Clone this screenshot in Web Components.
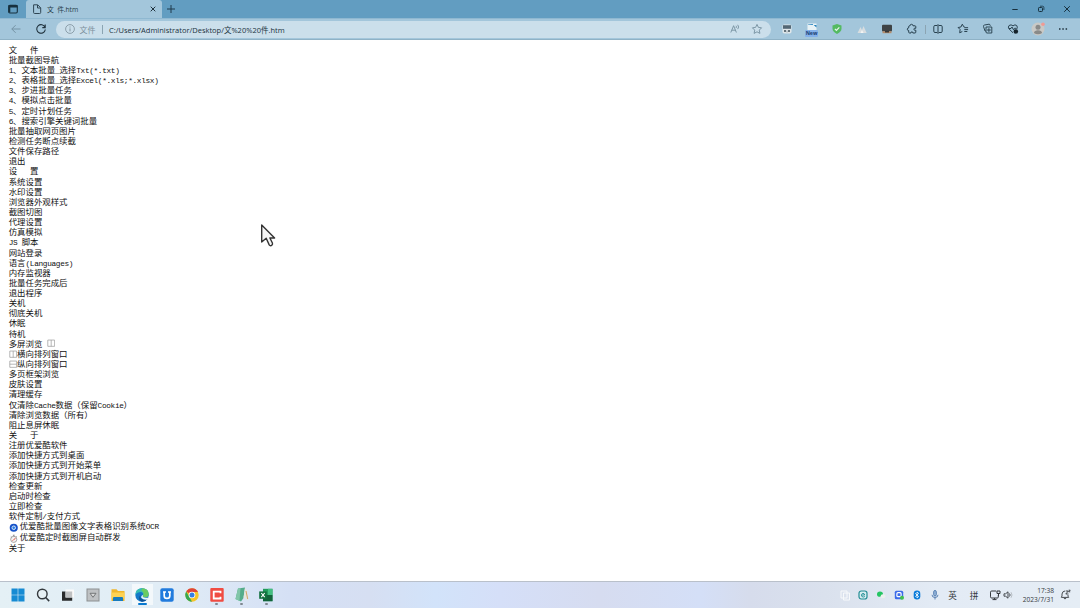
<!DOCTYPE html>
<html>
<head>
<meta charset="utf-8">
<title>文 件.htm</title>
<style>
    body {
        margin: 0;
        width: 1080px;
        height: 608px;
        overflow: hidden;
        font-family: "Open Sans", "Noto Sans CJK SC", sans-serif;
    }
</style>
</head>
<body>
<browser-window></browser-window>

<script>
const ICONS = {
    tabs: `<rect x="3.7" y="4.2" width="8.6" height="7.8" rx="1.2" fill="none" stroke="#17303e" stroke-width="1.1"/><path d="M3.5 4h9v2.6h-9zM3.5 6h1.8v5.5H3.5z" fill="#17303e"/>`,
    page: `<path d="M4.6 3.8h4.1l3 3v4.7q0 1-1 1H5.600q-1 0-1-1zM8.500 4v3h3" fill="none" stroke="#2f4654" stroke-width="1"/>`,
    close: `<path d="M5.700 5.700l4.600 4.600M10.300 5.700l-4.600 4.600" stroke="#20323d" stroke-width="1"/>`,
    plus: `<path d="M8 4v8M4 8h8" stroke="#1f3b4c" stroke-width="1"/>`,
    min: `<path d="M5.300 8.500h5.400" stroke="#17303e" stroke-width="1"/>`,
    restore: `<rect x="5.500" y="6.500" width="4" height="4" rx=".8" fill="none" stroke="#17303e" stroke-width="1"/><path d="M7 5.200h2.500q1.400 0 1.400 1.400V9" fill="none" stroke="#17303e" stroke-width=".8"/>`,
    exit: `<path d="M5.200 5.200l5.600 5.600M10.800 5.200l-5.600 5.600" stroke="#17303e" stroke-width="1"/>`,
    back: `<path d="M12.500 8H3.800M7.600 4.200L3.800 8l3.800 3.800" fill="none" stroke="#7593a5" stroke-width="1"/>`,
    reload: `<path d="M12 6.300A4.300 4.300 0 1 0 12.300 8.500M12.200 3.600v3H9.300" fill="none" stroke="#20323d" stroke-width="1.100"/>`,
    info: `<circle cx="8" cy="8" r="4.400" fill="none" stroke="#7c8f9b" stroke-width=".8"/><path d="M8 7.400v3M8 5.500v1" stroke="#7c8f9b" stroke-width=".9"/>`,
    read: `<path d="M3.800 11.500L6.600 4.700l2.800 6.800M4.800 9.200h3.700M9 4.800q1 1 0 2.200M10.700 3.800q1.900 2.200 0 4.300" fill="none" stroke="#75909f" stroke-width=".9"/>`,
    star: `<path d="M8 3.400l1.400 3 3.200.4-2.300 2.300.6 3.300L8 10.800l-2.900 1.600.6-3.300-2.300-2.300 3.200-.4z" fill="none" stroke="#75909f" stroke-width=".9"/>`,
    robot: `<rect x="3.500" y="3.500" width="9" height="9" rx="1.800" fill="#dfe6e9"/><path d="M4 4.200h8v3.600H4z" fill="#536875"/><path d="M5 9h2v2H5zM9 9h2v2H9z" fill="#65747c"/><path d="M7.500 9.500h1v2h-1z" fill="#9aa8af"/>`,
    shield: `<path d="M8 3l4.500 1.400v3.400q0 3-4.500 5.200-4.500-2.200-4.500-5.200V4.400z" fill="#54ba62"/><path d="M5.900 7.800l1.500 1.500 2.900-3" fill="none" stroke="#e9f8eb" stroke-width="1.200"/>`,
    hills: `<path d="M3.500 12l3-6 1.500 3 1.500-4 3.200 7z" fill="#d7dde0"/><path d="M6.500 12l1.500-3 1.600 3z" fill="#f4f5f4"/>`,
    screen: `<rect x="3" y="3.800" width="10" height="6.800" rx="1" fill="#3f4345"/><path d="M3.500 10.200h9v2h-9z" fill="#b48c6b"/><path d="M6 9.700h4v1.800H6z" fill="#373839"/>`,
    puzzle: `<path d="M6 4.800q0-1.500 1.500-1.500T9 4.800h2q.8 0 .8.900v1.600q-1.900-.6-1.900.9t1.900 1v1.900q0 .900-.8.900H8.800q.2-1.200-.9-1.200t-.9 1.200H5.500q-.8 0-.8-.9V9.500q-1.400 0-1.400-1.300t1.400-1.300V5.700q0-.9.8-.9z" fill="none" stroke="#28414f" stroke-width="1"/>`,
    split: `<path d="M7.300 4.500H5q-1.200 0-1.200 1.200v4.600q0 1.200 1.200 1.200h2.300M8.700 4.500H11q1.200 0 1.200 1.200v4.600q0 1.200-1.200 1.200H8.700M8 3.200v9.600" fill="none" stroke="#28414f" stroke-width="1"/>`,
    favorites: `<path d="M9.600 5.900L8.800 5.800 7.300 3.200 5.900 6l-2.800.5 2 2-.4 3.300L7.300 10.500M9.300 6.700h3.800M9.300 8.600h3.800M9.300 10.500h3" fill="none" stroke="#28414f" stroke-width="1"/>`,
    collections: `<path d="M5.800 10H5L3.500 5.500q-.3-1.200 1-1.500l4.600-.8q1 0 1.200 1.600M6 6h5.800v6H7q-1 0-1-1zM8.900 7.200v3.700M7 9h3.800" fill="none" stroke="#28414f" stroke-width=".95"/>`,
    health: `<path d="M8 11.800L4.100 8q-1.500-2 0-3.500 2-1.500 3.900.4 2-1.900 3.700-.4Q13 6.300 11.700 8M4 7.500h2l1-1.500 1.500 2.800 1-1.500h1.700" fill="none" stroke="#28414f" stroke-width="1"/><circle cx="10.800" cy="10.500" r="2.300" fill="#15232b"/>`,
    avatar: `<circle cx="8" cy="8" r="6.500" fill="#c9c9c6"/><circle cx="8" cy="6.300" r="2.500" fill="#898a89"/><path d="M3.900 12q.5-2.700 4.100-2.700T12.100 12Q8 14.700 3.900 12" fill="#898a89"/><circle cx="13" cy="3.300" r="1.800" fill="#f19a94"/>`,
    more: `<path d="M4 7.300h1.500v1.400H4zM7.300 7.300h1.500v1.400H7.300zM10.600 7.300h1.500v1.400h-1.500z" fill="#20323d"/>`,
    windows: `<path d="M1.500 1.500h6.200v6.200H1.500zM8.300 1.500h6.200v6.200H8.300zM1.500 8.300h6.200v6.200H1.500zM8.300 8.300h6.200v6.200H8.300z" fill="#168bd3"/>`,
    search: `<circle cx="7.300" cy="7" r="4.800" fill="#e6f0f4" stroke="#343a3e" stroke-width="1.400"/><path d="M10.700 10.500l3.500 3.600" stroke="#343a3e" stroke-width="1.600"/>`,
    task: `<path d="M5.500 2.500h8.500v8H5.500z" fill="#fafafa"/><path d="M2 4.500h3.500v6h6.700v3.300H2z" fill="#292a2b"/><path d="M5.500 4.500h6.700v6H5.500z" fill="#bfc1c2"/>`,
    down: `<rect x="2" y="2" width="12" height="12" fill="#bec1c3" stroke="#8c8f91" stroke-width="1"/><path d="M5 6.300h6l-3 4z" fill="#d8d9d9" stroke="#6b6d6e" stroke-width=".9"/>`,
    folder: `<path d="M1.500 2.300h5l1.500 1.700h6.500v10H1.500z" fill="#efb62c"/><path d="M1.500 5.500h13v6h-13z" fill="#fdd253"/><path d="M4 10h8q1 0 1 1v3H3v-3q0-1 1-1" fill="#177bbd"/>`,
    edge: `<circle cx="8" cy="8" r="6.700" fill="#1479c9"/><path d="M1.300 7.500Q2 1.300 8 1.300q6.500.2 6.700 5.900 0 3-3.500 3.100-2.800 0-2-1.800.8-2.800-2.200-3.500-3.300-.4-5.700 2.500" fill="#36bdb3"/><path d="M8 1.300q6.500.2 6.700 5.900 0 3-3.500 3.100-2.800 0-2-1.800 1.200-3-1.700-5" fill="#6acb62"/><path d="M6.800 7q-1.800 4.500 2.500 5.500 2.200.5 4.300-.7Q11.500 15 7.700 14.700 3 13 6.800 7" fill="#105397"/><path d="M9.100 7.800q-1.500 2.800 2.600 3h2.800l-1 1.800q-4.200.5-6.300-1.800-.5-2.200 1.900-3" fill="#ecf7f8"/>`,
    ublue: `<rect x="1.300" y="1.300" width="13.400" height="13.400" rx="2" fill="#217bdd"/><path d="M5.200 5v3.700q0 2.700 2.800 2.700t2.800-2.700V5M4 5h3M9 5h3" fill="none" stroke="#fff" stroke-width="1.700"/>`,
    chrome: `<circle cx="8" cy="8" r="6.700" fill="#f5c52a"/><path d="M8 8L2.200 4.600A6.700 6.700 0 0 1 14 5H8z" fill="#de4439"/><path d="M2.200 4.600L5.400 10 8 14.700A6.700 6.700 0 0 1 2.200 4.600" fill="#36a853"/><circle cx="8" cy="8" r="3.300" fill="#fff"/><circle cx="8" cy="8" r="2.500" fill="#347fe3"/>`,
    camtasia: `<rect x="1.300" y="1" width="13.400" height="13.700" rx="1" fill="#f04c43"/><path d="M11.500 6.200V4.700H4.700v6.800h6.800v-1.700" fill="none" stroke="#fff" stroke-width="1.800"/>`,
    note: `<path d="M4 1.500l7-1-1.500 10.500L7 14.500 1.500 12z" fill="#55ac8b"/><path d="M4 1.500l2.500-.4L5.500 14 1.500 12z" fill="#82c6a9"/><path d="M11 1l1.600 2 1.600 10.500-4.700-3z" fill="#e6e6dd"/><path d="M12 4l1.700 8" stroke="#d3a666"/>`,
    excel: `<path d="M5 1.800h9.500v12.400H5z" fill="#219b5b"/><path d="M10 1.800h4.500V8H10z" fill="#43bd80"/><path d="M5 8h9.500v6.200H5z" fill="#12633a"/><rect x="1.200" y="4.400" width="7.600" height="7.400" fill="#13713f"/><path d="M3.300 6l3.400 4.200M6.700 6l-3.400 4.200" stroke="#fff" stroke-width="1.100"/>`,
    copy: `<path d="M4 4h6v7H4zM6.500 6h6v7h-6z" fill="none" stroke="#f7f9fb" stroke-width="1"/>`,
    teal: `<rect x="4" y="4" width="8" height="8" rx="2.200" fill="#d7edf0" stroke="#238d94" stroke-width="1.200"/><path d="M9.900 9.500q-1.700 1.100-3 0-1.300-1.800.4-3 2.200-.6 2.400 1.500H7" fill="none" stroke="#238d94" stroke-width=".9"/>`,
    wechat: `<ellipse cx="7" cy="7.200" rx="3" ry="2.600" fill="#24c562"/><ellipse cx="10" cy="9.300" rx="2.400" ry="2" fill="#edf0ee"/>`,
    guard: `<rect x="3.800" y="3.800" width="8.400" height="8.400" rx="1.500" fill="#3b6be9"/><rect x="5.900" y="5.700" width="4.200" height="4" rx="1" fill="none" stroke="#fff" stroke-width="1.200"/><circle cx="11" cy="10.800" r="2" fill="#40bf50"/>`,
    bluetooth: `<rect x="4.700" y="3.500" width="6.600" height="9" rx="3.200" fill="#087bda"/><path d="M6.200 6.300l3.500 3.300L8 11V5l1.700 1.400-3.500 3.300" fill="none" stroke="#fff" stroke-width=".8"/>`,
    mic: `<rect x="6.700" y="3.500" width="2.600" height="5.500" rx="1.300" fill="#95b5da" stroke="#4c77ad" stroke-width=".9"/><path d="M5 7.800q0 2.700 3 2.700t3-2.700M8 10.500v2" fill="none" stroke="#4c77ad" stroke-width=".9"/>`,
    network: `<path d="M9.300 4H4.700q-1.200 0-1.200 1.200v4.600q0 1.200 1.200 1.200h5.600q1 0 1-1V8M5.500 12.600h4M7.500 11v1.500" fill="none" stroke="#34393d" stroke-width="1"/><path d="M10 4h3v2.500h-3zM11.500 6.500V9" fill="none" stroke="#34393d" stroke-width="1"/>`,
    sound: `<path d="M4 6.800h1.600L8 4.800v6.400L5.600 9.200H4zM9.500 6.500q1.200 1.500 0 3" fill="none" stroke="#34393d" stroke-width=".9"/><path d="M11 5.200q2 2.800 0 5.600" fill="none" stroke="#acb3b9" stroke-width=".8"/>`,
    bell: `<path d="M4.300 10.300L5 9V7q.3-2.800 3-3M11 8v1.200l.7 1.200H4.300M6.800 11.200q1.200 1.400 2.400 0M8.700 4h2.600L8.800 7h2.700M11.700 3.200h1.500l-1.500 1.600h1.500" fill="none" stroke="#34393d" stroke-width=".9"/>`,
    ocr: `<circle cx="8" cy="8" r="6.800" fill="#1752c8"/><circle cx="8" cy="8" r="3" fill="#2f82df" stroke="#dcebfc" stroke-width="1.600"/>`,
    timer: `<circle cx="8" cy="9" r="5.200" fill="#f6f3f2" stroke="#8a8685" stroke-width="1.200"/><path d="M6.500 2h3M8 2v2M3 4l1.300 1M13 4l-1.300 1" stroke="#777" stroke-width="1.200"/><path d="M8 9.300l3-2M8 9.300l-2 2" stroke="#dd4d3f" stroke-width="1.600"/>`,
    columns: `<path d="M1.500 2h13v12h-13zM8 2v12" fill="none" stroke="#959595" stroke-width="1.300"/>`,
    rows: `<path d="M1.500 2h13v12h-13zM1.500 8h13" fill="none" stroke="#959595" stroke-width="1.300"/>`,
    newbadge: `<path d="M3.500 2.500h9v7h-9z" fill="#e8f2f6"/><path d="M3.500 3h5l4 3.500V4z" fill="#2583bd"/>`
};

class UiIcon extends HTMLElement {
    constructor() {
        super();
        this.attachShadow({ mode: 'open' });
    }

    connectedCallback() {
        this.shadowRoot.innerHTML = `
        <style>
            :host {
                display: inline-block;
                flex: none;
                width: var(--size, 16px);
                height: var(--size, 16px);
                white-space: normal;
            }

            svg {
                display: block;
                width: 100%;
                height: 100%;
            }
        </style>
        <svg viewBox="0 0 16 16">${ICONS[this.getAttribute('name')]}</svg>
        `;
    }
}

class TabStrip extends HTMLElement {
    constructor() {
        super();
        this.attachShadow({ mode: 'open' });
        this.shadowRoot.innerHTML = `
        <style>
            :host {
                display: flex;
                align-items: center;
                height: 18px;
                background: #629dc1;
                box-sizing: border-box;
            }

            .actions {
                width: 26px;
                display: flex;
                justify-content: center;
            }

            .tab {
                display: flex;
                align-items: center;
                width: 135.5px;
                height: 18px;
                box-sizing: border-box;
                padding: 0 1px 0 3px;
                background: #a3c6db;
                border-radius: 3px 3px 0 0;
                font-size: 6.8px;
                color: #263c49;
            }

            .title {
                flex: 1;
                padding-left: 2px;
                white-space: pre;
                word-spacing: 1.800px;
                letter-spacing: -.100px;
            }

            .controls {
                display: flex;
                gap: 10px;
                margin-left: auto;
                padding-right: 5px;
            }
        </style>
        <div class="actions"><ui-icon name="tabs"></ui-icon></div>
        <div class="tab">
            <ui-icon name="page"></ui-icon>
            <span class="title"><slot></slot></span>
            <ui-icon name="close"></ui-icon>
        </div>
        <ui-icon name="plus" style="margin-left:1.500px"></ui-icon>
        <div class="controls">
            <ui-icon name="min"></ui-icon>
            <ui-icon name="restore"></ui-icon>
            <ui-icon name="exit"></ui-icon>
        </div>
        `;
    }
}

class ToolBar extends HTMLElement {
    constructor() {
        super();
        this.attachShadow({ mode: 'open' });
        const cell = name => `<span class="cell"><ui-icon name="${name}"></ui-icon></span>`;
        this.shadowRoot.innerHTML = `
        <style>
            :host {
                display: flex;
                align-items: center;
                height: 22px;
                box-sizing: border-box;
                padding: 0 4px 0 3px;
                background: #a3c6db;
                border-top: 1px solid #8fb8d1;
                border-bottom: 1px solid #8fb2c6;
            }

            .cell {
                display: flex;
                flex: none;
                justify-content: center;
                width: 25px;
                position: relative;
            }

            .address {
                display: flex;
                align-items: center;
                width: 715px;
                height: 17px;
                margin: 0 3.500px 0 3px;
                box-sizing: border-box;
                padding: 0 6px;
                border-radius: 9px;
                background: #cbdfeb;
                font-size: 7.500px;
                color: #20323d;
            }

            .scheme {
                color: #7c8f9b;
                font-size: 8px;
                padding: 0 6px 0 1.500px;
            }

            .address i, .sep {
                width: 1px;
                height: 9px;
                background: #8ba4b2;
            }

            .url {
                flex: 1;
                padding-left: 6.500px;
            }

            .new {
                position: absolute;
                left: 5.500px;
                top: 8.500px;
                width: 13px;
                height: 7px;
                background: #83b0ea;
                border-radius: 1px;
                font: bold 5.200px/7px "Open Sans";
                text-align: center;
                color: #1a3f73;
            }
        </style>
        ${cell('back')}${cell('reload')}
        <div class="address">
            <ui-icon name="info"></ui-icon>
            <span class="scheme">文件</span><i></i>
            <span class="url"><slot></slot></span>
            <ui-icon name="read" style="margin-right:6px"></ui-icon>
            <ui-icon name="star"></ui-icon>
        </div>
        ${cell('robot')}
        <span class="cell"><ui-icon name="newbadge"></ui-icon><span class="new">New</span></span>
        ${['shield', 'hills', 'screen', 'puzzle'].map(cell).join('')}
        <span class="sep"></span>
        ${['split', 'favorites', 'collections', 'health', 'avatar', 'more'].map(cell).join('')}
        `;
    }
}

class MenuList extends HTMLElement {
    #lines = [
        '文   件', '批量截图导航', '1、文本批量_选择Txt(*.txt)', '2、表格批量_选择Excel(*.xls;*.xlsx)',
        '3、步进批量任务', '4、模拟点击批量', '5、定时计划任务', '6、搜索引擎关键词批量',
        '批量抽取网页图片', '检测任务断点续截', '文件保存路径', '退出',
        '设   置', '系统设置', '水印设置', '浏览器外观样式', '截图切图', '代理设置', '仿真模拟',
        'JS 脚本', '网站登录', '语言(Languages)', '内存监视器', '批量任务完成后', '退出程序',
        '关机', '彻底关机', '休眠', '待机', '多屏浏览 {columns}', '{columns}横向排列窗口',
        '{rows}纵向排列窗口', '多页框架浏览', '皮肤设置', '清理缓存', '仅清除Cache数据（保留Cookie）',
        '清除浏览数据（所有）', '阻止息屏休眠', '关   于', '注册优爱酷软件', '添加快捷方式到桌面',
        '添加快捷方式到开始菜单', '添加快捷方式到开机启动', '检查更新', '启动时检查', '立即检查',
        '软件定制/支付方式', '{ocr}优爱酷批量图像文字表格识别系统OCR', '{timer}优爱酷定时截图屏自动群发', '关于'
    ];

    constructor() {
        super();
        this.attachShadow({ mode: 'open' });
        this.shadowRoot.innerHTML = `
        <style>
            :host {
                display: block;
                padding: 3.700px 0 0 8.700px;
                font-family: "Noto Sans CJK SC", sans-serif;
                font-size: 8.420px;
                color: #111;
            }

            div {
                height: 10.150px;
                line-height: 10.150px;
                white-space: pre;
                text-spacing-trim: space-all;
            }

            div.tall {
                height: 11px;
                line-height: 11px;
            }

            b {
                font: 7.800px/0 "Liberation Mono", monospace;
                letter-spacing: -.350px;
            }

            ui-icon {
                --size: 8.400px;
                vertical-align: -1px;
            }

            .tall ui-icon {
                --size: 9.500px;
                margin: -2px 1px -2px .5px;
                vertical-align: -1.500px;
            }
        </style>
        ${this.#lines.map(l => this.#renderLine(l)).join('')}
        `;
    }

    // half-width runs get their own monospace font
    #renderLine(line) {
        const tall = /^\{(ocr|timer)\}/.test(line);
        const html = line.replace(/\{(\w+)\}|[\x20-\x7a]+/g, (m, icon) =>
            icon ? `<ui-icon name="${icon}"></ui-icon>` : `<b>${m}</b>`);
        return `<div class="${tall ? 'tall' : ''}">${html}</div>`;
    }
}

class TaskBar extends HTMLElement {
    constructor() {
        super();
        this.attachShadow({ mode: 'open' });
        const apps = ['windows', 'search', 'task', 'down', 'folder', 'edge', 'ublue', 'chrome', 'camtasia', 'note', 'excel'];
        const running = ['camtasia', 'note', 'excel'];
        const tray = ['copy', 'teal', 'wechat', 'guard', 'bluetooth', 'mic'];
        this.shadowRoot.innerHTML = `
        <style>
            :host {
                display: flex;
                align-items: center;
                height: 27px;
                box-sizing: border-box;
                border-top: 1px solid #b9c0ca;
                background: linear-gradient(90deg, #e4f0f5 0, #e1edf6 160px, #d5e0f5 290px, #d6dff2 370px, #d2e3fa 435px, #d5dff8 500px, #d6dcf0 600px, #d4dff7 700px, #d6dcec 750px, #dae1ed 825px, #e3ebf5 940px, #e5edf5 1080px);
                color: #34393d;
                font-size: 8.600px;
            }

            .apps {
                display: flex;
                padding-left: 6px;
            }

            .app {
                display: flex;
                justify-content: center;
                align-items: center;
                width: 24.800px;
                height: 26px;
                position: relative;
            }

            .edge {
                background: linear-gradient(#f3f8fb, #f3f8fb) center 45%/21px 21px no-repeat;
            }

            .edge::after, .running::after {
                content: "";
                position: absolute;
                bottom: 3px;
                width: 3px;
                height: 2px;
                border-radius: 1px;
                background: #7f8891;
            }

            .edge::after {
                width: 9px;
                background: #0878cf;
            }

            .tray {
                display: flex;
                align-items: center;
                margin-left: auto;
                padding-right: 7px;
            }

            .tray span {
                display: flex;
                justify-content: center;
                width: 18px;
            }

            .clock {
                width: 41px;
                padding-right: 3px;
                box-sizing: border-box;
                font-size: 6.600px;
                line-height: 9px;
                text-align: right;
                white-space: nowrap;
            }
        </style>
        <div class="apps">
            ${apps.map(a => `<div class="app ${a} ${running.includes(a) ? 'running' : ''}"><ui-icon name="${a}"></ui-icon></div>`).join('')}
        </div>
        <div class="tray">
            ${tray.map(t => `<span><ui-icon name="${t}"></ui-icon></span>`).join('')}
            <span>英</span><span style="width:25px">拼</span>
            <ui-icon name="network"></ui-icon>
            <ui-icon name="sound" style="margin-left:-2.500px"></ui-icon>
            <div class="clock">17:38<br>2023/7/31</div>
            <ui-icon name="bell"></ui-icon>
        </div>
        `;
    }
}

class BrowserWindow extends HTMLElement {
    constructor() {
        super();
        this.attachShadow({ mode: 'open' });
        this.shadowRoot.innerHTML = `
        <style>
            :host {
                display: flex;
                flex-direction: column;
                position: relative;
                width: 1080px;
                height: 608px;
                background: #fff;
            }

            menu-list {
                flex: 1;
                min-height: 0;
            }

            .cursor {
                position: absolute;
                left: 260px;
                top: 223px;
                width: 17px;
                height: 25px;
            }
        </style>
        <tab-strip>文 件.htm</tab-strip>
        <tool-bar>C:/Users/Administrator/Desktop/文%20%20件.htm</tool-bar>
        <menu-list></menu-list>
        <task-bar></task-bar>
        <svg class="cursor" viewBox="0 0 17 25">
            <path d="M1.700 2v17l4.500-3.700 3 6.600q1.200 1.600 2.800 0 .8-.8.400-1.900l-2.500-5h4.700z" fill="#f5f5f5" stroke="#333" stroke-width="1.400" stroke-linejoin="round"/>
        </svg>
        `;
    }
}

customElements.define('ui-icon', UiIcon);
customElements.define('tab-strip', TabStrip);
customElements.define('tool-bar', ToolBar);
customElements.define('menu-list', MenuList);
customElements.define('task-bar', TaskBar);
customElements.define('browser-window', BrowserWindow);
</script>
</body>
</html>
